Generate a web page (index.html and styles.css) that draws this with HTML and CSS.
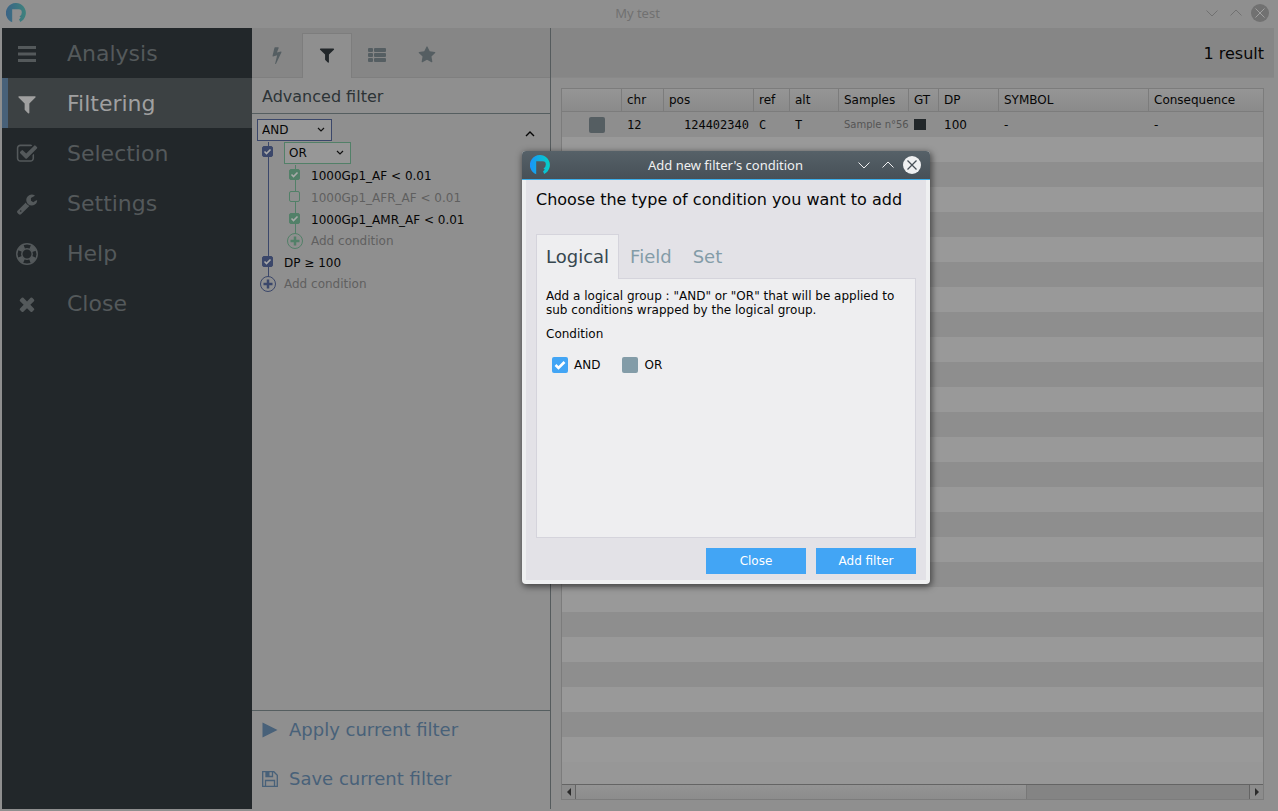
FILE: index.html
```html
<!DOCTYPE html>
<html lang="en">
<head>
<meta charset="utf-8">
<title>My test</title>
<link rel="stylesheet" href="styles.css">
</head>
<body>
<svg class="defs" width="0" height="0" aria-hidden="true">
  <defs>
    <linearGradient id="logo-bright" x1="0" x2="1" y1="0" y2="0"><stop offset="0" stop-color="#1a93fb"/><stop offset="1" stop-color="#04d0c4"/></linearGradient>
    <linearGradient id="logo-dim" x1="0" x2="1" y1="0" y2="0"><stop offset="0" stop-color="#3a6386"/><stop offset="1" stop-color="#3e827d"/></linearGradient>
    <symbol id="logo" viewBox="0 0 20 20"><path d="M6.200 19.300A10 10 0 1 1 14.200 19L13 16.200L14.800 14.800L13.500 13.500Q15.800 12.500 15.800 9.500Q15.800 6.200 12.800 6.200H6.200Z"/></symbol>
    <symbol id="down" viewBox="0 0 14 14"><path d="M1.500 4.500L7 10L12.500 4.500" fill="none" stroke="currentColor"/></symbol>
    <symbol id="up" viewBox="0 0 14 14"><path d="M1.500 9.500L7 4L12.500 9.500" fill="none" stroke="currentColor"/></symbol>
    <symbol id="filter" viewBox="0 0 1792 1792"><path d="M1595 295q17 41-14 70l-493 493v742q0 42-39 59-13 5-25 5-27 0-45-19l-256-256q-19-19-19-45V858L211 365q-31-29-14-70 17-39 59-39h1280q42 0 59 39z"/></symbol>
    <symbol id="plus" viewBox="0 0 18 18"><circle cx="9" cy="9" r="7.500" fill="none" stroke="currentColor"/><path d="M9 4.500v9M4.500 9h9" stroke="currentColor" stroke-width="2.500"/></symbol>
  </defs>
</svg>

<div class="window">
  <header class="titlebar">
    <svg class="logo" fill="url(#logo-dim)"><use href="#logo"/></svg>
    <h1>My test</h1>
    <div class="controls">
      <button aria-label="Minimize"><svg><use href="#down"/></svg></button>
      <button aria-label="Maximize"><svg><use href="#up"/></svg></button>
      <button class="close" aria-label="Close window"><svg viewBox="0 0 18 18"><circle cx="9" cy="9" r="9" fill="currentColor"/><path class="cross" d="M4.500 4.500l9 9M13.500 4.500l-9 9"/></svg></button>
    </div>
  </header>

  <div class="workspace">
    <nav class="sidebar">
      <a href="#"><svg viewBox="0 0 22 22"><path d="M2 3h18v3H2zM2 9.500h18v3H2zM2 16h18v3H2z"/></svg>Analysis</a>
      <a href="#" class="active"><svg><use href="#filter"/></svg>Filtering</a>
      <a href="#"><svg viewBox="0 0 1792 1792"><path d="M1472 930v318q0 119-84.500 203.500T1184 1536H352q-119 0-203.500-84.500T64 1248V416q0-119 84.500-203.500T352 128h832q63 0 117 25 15 7 18 23 3 17-9 29l-49 49q-10 10-23 10-3 0-9-2-23-6-45-6H352q-66 0-113 47t-47 113v832q0 66 47 113t113 47h832q66 0 113-47t47-113v-254q0-13 9-22l64-64q10-10 23-10 6 0 12 3 20 8 20 29zm231-489l-814 814q-24 24-57 24t-57-24l-430-430q-24-24-24-57t24-57l110-110q24-24 57-24t57 24l263 263 647-647q24-24 57-24t57 24l110 110q24 24 24 57t-24 57z"/></svg>Selection</a>
      <a href="#"><svg viewBox="0 0 1792 1792"><path d="M448 1472q0-26-19-45t-45-19-45 19-19 45 19 45 45 19 45-19 19-45zm644-420l-682 682q-37 37-90 37-52 0-91-37L123 1626q-38-36-38-90 0-53 38-91l681-681q39 98 114.500 173.500T1092 1052zm634-435q0 39-23 106-47 134-164.500 217.500T1280 1024q-185 0-316.500-131.500T832 576t131.500-316.500T1280 128q58 0 121.500 16.500T1509 191q16 11 16 28t-16 28l-293 169v224l193 107q5-3 79-48.500t135.500-81T1694 582q15 0 23.500 10t8.500 25z"/></svg>Settings</a>
      <a href="#"><svg viewBox="0 0 22 22"><g fill="none" stroke="currentColor"><circle cx="11" cy="11" r="10.200" stroke-width="1.500"/><circle cx="11" cy="11" r="5.200" stroke-width="1.400"/><circle cx="11" cy="11" r="7.800" stroke-width="4.600" stroke-dasharray="6.125 6.125" stroke-dashoffset="-3.060"/></g></svg>Help</a>
      <a href="#"><svg viewBox="0 0 1792 1792"><path d="M1490 1322q0 40-28 68l-136 136q-28 28-68 28t-68-28l-294-294-294 294q-28 28-68 28t-68-28l-136-136q-28-28-28-68t28-68l294-294-294-294q-28-28-28-68t28-68l136-136q28-28 68-28t68 28l294 294 294-294q28-28 68-28t68 28l136 136q28 28 28 68t-28 68l-294 294 294 294q28 28 28 68z"/></svg>Close</a>
    </nav>

    <section class="filters">
      <div class="filter-tabs">
        <button aria-label="Quick filter"><svg viewBox="0 0 1792 1792"><path d="M1333 566q18 20 7 44l-540 1157q-13 25-42 25-4 0-14-2-17-5-25.500-19t-4.500-30l197-808-406 101q-4 1-12 1-18 0-31-11-18-15-13-39l201-825q4-14 16-23t28-9h328q19 0 32 12.500t13 29.500q0 8-5 18l-171 463 396-98q8-2 12-2 19 0 34 15z"/></svg></button>
        <button class="active" aria-label="Advanced filter"><svg><use href="#filter"/></svg></button>
        <button aria-label="Fields"><svg viewBox="0 0 18 18"><rect x="0" y="2" width="5" height="4" rx="1"/><rect x="6" y="2" width="12" height="4" rx="1"/><rect x="0" y="7" width="5" height="4" rx="1"/><rect x="6" y="7" width="12" height="4" rx="1"/><rect x="0" y="12" width="5" height="4" rx="1"/><rect x="6" y="12" width="12" height="4" rx="1"/></svg></button>
        <button aria-label="Saved filters"><svg viewBox="0 0 1792 1792"><path d="M1728 647q0 22-26 48l-363 354 86 500q1 7 1 20 0 21-10.500 35.500T1385 1619q-19 0-40-12l-449-236-449 236q-22 12-40 12-21 0-31.500-14.500T365 1569q0-6 2-20l86-500L89 695q-25-27-25-48 0-37 56-46l502-73L847 73q19-41 49-41t49 41l225 455 502 73q56 9 56 46z"/></svg></button>
      </div>
      <h2>Advanced filter</h2>
      <div class="tree">
        <div class="group blue">
          <select class="operator wide" aria-label="Root operator"><option>AND</option><option>OR</option></select>
          <ul>
            <li>
              <input type="checkbox" checked aria-label="Enable OR group">
              <div class="group green">
                <select class="operator" aria-label="Group operator"><option>OR</option><option>AND</option></select>
                <ul>
                  <li><input type="checkbox" id="c1" checked><label for="c1">1000Gp1_AF &lt; 0.01</label></li>
                  <li><input type="checkbox" id="c2"><label for="c2">1000Gp1_AFR_AF &lt; 0.01</label></li>
                  <li><input type="checkbox" id="c3" checked><label for="c3">1000Gp1_AMR_AF &lt; 0.01</label></li>
                  <li class="add"><button><svg><use href="#plus"/></svg>Add condition</button></li>
                </ul>
              </div>
            </li>
            <li><input type="checkbox" id="c4" checked><label for="c4">DP ≥ 100</label></li>
            <li class="add"><button><svg><use href="#plus"/></svg>Add condition</button></li>
          </ul>
        </div>
        <button class="collapse" aria-label="Collapse"><svg viewBox="0 0 10 6"><path d="M1 5L5 1L9 5" fill="none" stroke="currentColor" stroke-width="1.400"/></svg></button>
      </div>
      <div class="actions">
        <button><svg viewBox="0 0 16 16"><path d="M0.500 0.500L15.500 8L0.500 15.500z"/></svg>Apply current filter</button>
        <button><svg viewBox="0 0 16 16"><path fill="none" stroke="currentColor" stroke-width="1.300" d="M0.700 0.700H11.800L15.300 4.200V15.300H0.700zM3.500 15V9.500H12.500V15M4 1V5.500H10.500V1"/><path d="M4 1h3.500v4.500H4z"/></svg>Save current filter</button>
      </div>
    </section>

    <main class="results">
      <p class="count">1 result</p>
      <div class="grid">
        <div class="rows">
          <table>
            <colgroup><col class="w60"><col class="w42"><col class="w90"><col class="w36"><col class="w49"><col class="w70"><col class="w30"><col class="w60"><col class="w150"><col></colgroup>
            <thead><tr><th></th><th>chr</th><th>pos</th><th>ref</th><th>alt</th><th>Samples</th><th>GT</th><th>DP</th><th>SYMBOL</th><th>Consequence</th></tr></thead>
            <tbody><tr><td class="pick"><input type="checkbox" aria-label="Select variant"></td><td class="mono">12</td><td class="mono right">124402340</td><td class="mono">C</td><td class="mono">T</td><td class="sample">Sample n°56</td><td><span class="genotype"></span></td><td>100</td><td>-</td><td>-</td></tr></tbody>
          </table>
        </div>
        <div class="scrollbar">
          <button aria-label="Scroll left"><svg viewBox="0 0 4 8"><path d="M4 0v8L0 4z"/></svg></button>
          <div class="track"><div class="thumb"></div></div>
          <button aria-label="Scroll right"><svg viewBox="0 0 4 8"><path d="M0 0v8l4-4z"/></svg></button>
        </div>
      </div>
    </main>
  </div>
</div>

<div class="dialog" role="dialog" aria-labelledby="dialog-title">
  <header class="titlebar">
    <svg class="logo" fill="url(#logo-bright)"><use href="#logo"/></svg>
    <h2 id="dialog-title">Add new filter's condition</h2>
    <div class="controls">
      <button aria-label="Minimize"><svg><use href="#down"/></svg></button>
      <button aria-label="Maximize"><svg><use href="#up"/></svg></button>
      <button class="close" aria-label="Close dialog"><svg viewBox="0 0 18 18"><circle cx="9" cy="9" r="9" fill="currentColor"/><path class="cross" d="M4.500 4.500l9 9M13.500 4.500l-9 9"/></svg></button>
    </div>
  </header>
  <div class="dialog-body">
    <h3>Choose the type of condition you want to add</h3>
    <div class="tabs" role="tablist">
      <button role="tab" aria-selected="true">Logical</button>
      <button role="tab" aria-selected="false">Field</button>
      <button role="tab" aria-selected="false">Set</button>
    </div>
    <div class="panel" role="tabpanel">
      <p>Add a logical group : "AND" or "OR" that will be applied to sub conditions wrapped by the logical group.</p>
      <p>Condition</p>
      <div class="choices">
        <label><input type="checkbox" checked>AND</label>
        <label><input type="checkbox">OR</label>
      </div>
    </div>
    <footer><button>Close</button><button>Add filter</button></footer>
  </div>
</div>
</body>
</html>
```

FILE: styles.css
```css
* { box-sizing: border-box; margin: 0; padding: 0; }
body { background: #8f8f8f; color: #060606; font: 12px/14px "DejaVu Sans", sans-serif; }
button { background: none; border: 0; color: inherit; font: inherit; cursor: pointer; }
svg { fill: currentColor; display: block; flex: none; }
ul { list-style: none; }
.defs { position: absolute; }
input[type="checkbox"] { appearance: none; flex: none; }

.window { display: flex; flex-direction: column; height: 100vh; }
.titlebar { display: grid; grid-template-columns: 1fr auto 1fr; align-items: center; height: 28px; padding: 0 9px 2px 6px; color: #717171; }
.titlebar h1, .titlebar h2 { font: 13px/18px "Noto Sans", sans-serif; }
.logo { width: 20px; height: 20px; }
.window .logo { fill: url(#logo-dim); }
.dialog .logo { fill: url(#logo-bright); }
.controls { display: flex; justify-content: flex-end; gap: 10px; }
.controls button { display: grid; place-items: center; width: 14px; height: 18px; }
.controls svg { width: 14px; height: 14px; }
.controls .close, .controls .close svg { width: 18px; height: 18px; }
.controls .close { margin-left: -2px; }
.cross { fill: none; stroke: #a0a0a0; }

.workspace { display: flex; flex: 1; min-height: 0; padding: 0 4px 2px 2px; }

.sidebar { flex: none; width: 250px; background: #22272a; }
.sidebar a { display: flex; align-items: center; gap: 28px; height: 50px; padding: 1px 0 0 13px; color: #54595b; font-size: 22px; line-height: 26px; text-decoration: none; }
.sidebar a.active { padding-left: 7px; border-left: 6px solid #486179; background: #3c4143; color: #a0a0a0; }
.sidebar svg { width: 24px; height: 22px; }

.filters { display: flex; flex: none; flex-direction: column; width: 299px; border-right: 1px solid #555b5d; }
.filter-tabs { display: flex; height: 50px; padding-top: 5px; border-bottom: 1px solid #7f7f7f; background: #868686; color: #555e62; }
.filter-tabs button { display: grid; place-items: center; width: 50px; height: 45px; padding-bottom: 2px; border: 1px solid transparent; border-bottom: 0; }
.filter-tabs button.active { border-color: #7d7d7d; background: #8f8f8f; color: #22272a; }
.filter-tabs svg { width: 18px; height: 18px; }
.filters h2 { height: 36px; padding-left: 10px; border-bottom: 1px solid #555e60; color: #2c3336; font-size: 16px; font-weight: normal; line-height: 37px; }
.tree { display: flex; flex: 1; align-items: flex-start; justify-content: space-between; padding: 5px 15px 0 5px; }
.collapse { padding: 12px 0 0; }
.collapse svg { width: 10px; height: 6px; }
.blue { --accent: #3b476a; }
.green { --accent: #528068; }
.group { color: var(--accent); }
.operator { display: block; width: 67px; height: 22px; margin-bottom: 1px; padding-left: 4px; appearance: none; border: 1px solid var(--accent); border-radius: 0; background: #979797 url("data:image/svg+xml,%3Csvg xmlns='http://www.w3.org/2000/svg' viewBox='0 0 8 6'%3E%3Cpath d='M1 1l3 3 3-3' fill='none' stroke='%23111' stroke-width='1.200'/%3E%3C/svg%3E") no-repeat right 6px center / 8px 6px; color: #060606; font: 12px/20px "DejaVu Sans", sans-serif; }
.operator.wide { width: 75px; }
.group ul { background: linear-gradient(var(--accent), var(--accent)) no-repeat 11px 0 / 1px calc(100% - 18px); }
.group li { display: grid; grid-template-columns: 22px auto; column-gap: 5px; line-height: 22px; }
.group li > input { width: 11px; height: 11px; margin: 4px 0 0 5px; border: 1px solid var(--accent); border-radius: 2px; background: #8f8f8f; }
.group li > input:checked { background: var(--accent) url("data:image/svg+xml,%3Csvg xmlns='http://www.w3.org/2000/svg' viewBox='0 0 9 9'%3E%3Cpath d='M1.500 4.500l2 2 4-4' fill='none' stroke='%23aaa' stroke-width='1.600'/%3E%3C/svg%3E") center / 9px 9px; }
.group label { color: #060606; }
.group input:not(:checked) + label { color: #5f5f5f; }
.group .add { display: block; height: 21px; }
.add button { display: flex; align-items: center; gap: 5px; height: 20px; color: #606060; }
.add svg { width: 22px; height: 18px; color: var(--accent); }
.actions { display: flex; flex-direction: column; gap: 25px; height: 99px; padding: 7px 10px; border-top: 1px solid #555e60; color: #486179; font-size: 18px; line-height: 24px; }
.actions button { display: flex; align-items: center; gap: 11px; }
.actions svg { width: 16px; height: 16px; }

.results { display: flex; flex: 1; flex-direction: column; min-width: 0; }
.count { height: 50px; padding-right: 10px; border-bottom: 1px solid #898989; background: #868686; font-size: 16px; line-height: 51px; text-align: right; }
.grid { display: flex; flex: 1; flex-direction: column; margin: 10px 10px 9px; border: 1px solid #7c7c7c; }
.rows { flex: 1; background: linear-gradient(#979797, #979797) no-repeat bottom / 100% 22px, repeating-linear-gradient(#8e8e8e 0 25px, #999 25px 50px) 0 23px; }
table { width: 100%; table-layout: fixed; border-collapse: separate; border-spacing: 0; }
.w30 { width: 30px; } .w36 { width: 36px; } .w42 { width: 42px; } .w49 { width: 49px; } .w60 { width: 60px; }
.w70 { width: 70px; } .w90 { width: 90px; } .w150 { width: 150px; }
th, td { padding: 0 0 0 5px; font-weight: normal; text-align: left; white-space: nowrap; }
th { height: 23px; border-right: 1px solid #7c7c7c; border-bottom: 1px solid #7c7c7c; background: linear-gradient(#959595, #8a8a8a); }
th:last-child { border-right: 0; }
td { height: 25px; vertical-align: middle; }
.mono { font-family: "DejaVu Sans Mono", monospace; }
.right { padding-right: 5px; text-align: right; }
.sample { color: #555; font-size: 10px; }
.pick input { display: block; width: 16px; height: 16px; margin-left: 22px; border-radius: 2px; background: #555e62; }
.genotype { display: block; width: 12px; height: 11px; background: #22272a; }
.scrollbar { display: flex; height: 15px; border-top: 1px solid #646464; background: #848484; }
.scrollbar button { display: grid; place-items: center; width: 14px; border-right: 1px solid #646464; background: #8c8c8c; color: #2b2b2b; }
.scrollbar button:last-child { border-right: 0; border-left: 1px solid #646464; }
.scrollbar svg { width: 4px; height: 8px; }
.track { flex: 1; }
.thumb { width: 67%; height: 100%; border-right: 1px solid #787878; background: linear-gradient(#949494, #8c8c8c); }

.dialog { position: absolute; top: 151px; left: 522px; width: 408px; border-radius: 4px; background: #eff0f1; box-shadow: 1px 2px 6px 1px rgba(0, 0, 0, .5); color: #060606; }
.dialog .titlebar { height: 29px; padding: 0 9px 0 8px; border-bottom: 1px solid #3daee9; border-radius: 4px 4px 0 0; background: linear-gradient(#566168, #475057); color: #eff0f1; }
.dialog .cross { stroke: #475057; stroke-width: 1.300; }
.dialog-body { margin: 0 4px; padding: 11px 10px 6px; background: #e3e2e7; }
.dialog::after { content: ""; display: block; height: 4px; }
.dialog h3 { margin-bottom: 25px; font-size: 16px; font-weight: normal; line-height: 18px; white-space: nowrap; }
.tabs { display: flex; gap: 1px; height: 44px; }
.tabs button { padding: 1px 10px 0; color: #839ca8; font-size: 18px; line-height: 44px; }
.tabs button[aria-selected="true"] { height: 45px; padding: 0 9px; border: 1px solid #d5d4dc; border-bottom: 0; background: #eeeef0; color: #37474f; z-index: 1; }
.panel { min-height: 260px; padding: 10px 9px; border: 1px solid #d5d4dc; background: #eeeef0; }
.panel p { margin-bottom: 10px; }
.choices { display: flex; gap: 22px; margin-top: 16px; padding-left: 6px; }
.choices label { display: flex; align-items: center; gap: 6px; }
.choices input { width: 16px; height: 16px; border-radius: 2px; background: #839ca8; }
.choices input:checked { background: #42a5f5 url("data:image/svg+xml,%3Csvg xmlns='http://www.w3.org/2000/svg' viewBox='0 0 16 16'%3E%3Cpath d='M3.500 8l3 3 6-6' fill='none' stroke='white' stroke-width='2.600'/%3E%3C/svg%3E"); }
.dialog footer { display: flex; justify-content: flex-end; gap: 10px; margin-top: 10px; }
.dialog footer button { width: 100px; height: 26px; background: #42a5f5; color: #fff; }
```
